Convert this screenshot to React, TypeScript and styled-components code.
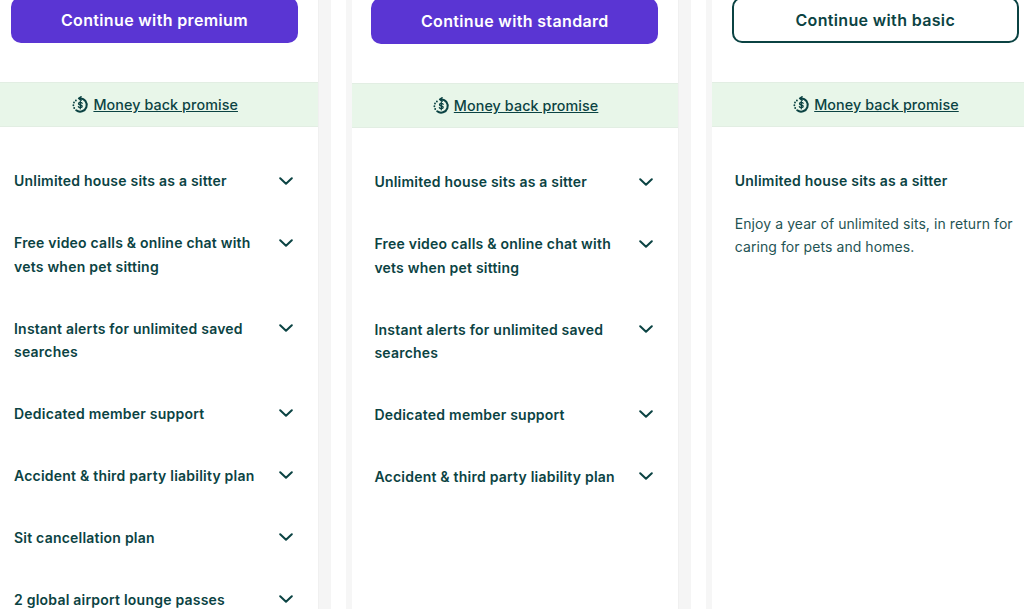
import React from "react";
import styled, { createGlobalStyle } from "styled-components";

const GlobalStyle = createGlobalStyle`
  html, body {
    margin: 0;
    padding: 0;
    background: #fff;
    overflow: hidden;
  }
`;

const plans = [
  {
    name: "premium",
    filled: true,
    drop: 0,
    features: [
      "Unlimited house sits as a sitter",
      "Free video calls & online chat with vets when pet sitting",
      "Instant alerts for unlimited saved searches",
      "Dedicated member support",
      "Accident & third party liability plan",
      "Sit cancellation plan",
      "2 global airport lounge passes",
    ],
  },
  {
    name: "standard",
    filled: true,
    drop: 1,
    features: [
      "Unlimited house sits as a sitter",
      "Free video calls & online chat with vets when pet sitting",
      "Instant alerts for unlimited saved searches",
      "Dedicated member support",
      "Accident & third party liability plan",
    ],
  },
  {
    name: "basic",
    filled: false,
    drop: 0,
    features: [],
  },
];

const MoneyBackIcon = () => (
  <svg width="18" height="18" viewBox="0 0 18 18" fill="none" stroke="#0b4343" strokeLinecap="round" strokeLinejoin="round">
    <path d="M9.2 2.4a6.6 6.6 0 1 1-4 11.9" strokeWidth="2" />
    <path d="M10 .8 7.7 2.4 10 4.2" strokeWidth="1.6" />
    <path d="M2.4 9.2v.1M3 6.5v.1M3.2 12v.1M4.9 4.4v.1" strokeWidth="1.9" />
    <path d="M11.1 7.3c-.3-.6-1-.9-1.8-.9-1 0-1.8.5-1.8 1.3 0 1.8 3.7.8 3.7 2.6 0 .9-.9 1.3-1.9 1.3-.9 0-1.6-.3-1.9-.9M9.3 5.2v7.6" strokeWidth="1.3" />
  </svg>
);

const Chevron = () => (
  <svg width="14" height="8" viewBox="0 0 14 8" fill="none" stroke="#0b4343" strokeWidth="2" strokeLinecap="round" strokeLinejoin="round">
    <path d="M1.2 1.2 7 6.8l5.8-5.6" />
  </svg>
);

export default function App() {
  return (
    <>
      <GlobalStyle />
      <Page>
        {plans.map((plan) => (
          <Card key={plan.name} $drop={plan.drop}>
            <CtaSlot>
              <Cta $filled={plan.filled}>Continue with {plan.name}</Cta>
            </CtaSlot>
            <PromiseBand>
              <MoneyBackIcon />
              <PromiseLink href="#">Money back promise</PromiseLink>
            </PromiseBand>
            {plan.features.length > 0 ? (
              <FeatureList>
                {plan.features.map((feature) => (
                  <FeatureRow key={feature}>
                    <FeatureTitle>{feature}</FeatureTitle>
                    <ChevronSlot>
                      <Chevron />
                    </ChevronSlot>
                  </FeatureRow>
                ))}
              </FeatureList>
            ) : (
              <OpenFeature>
                <FeatureTitle>Unlimited house sits as a sitter</FeatureTitle>
                <FeatureBody>
                  Enjoy a year of unlimited sits, in return for caring for pets
                  and homes.
                </FeatureBody>
              </OpenFeature>
            )}
          </Card>
        ))}
      </Page>
    </>
  );
}

const Page = styled.div`
  display: grid;
  grid-template-columns: repeat(3, 326.4px);
  column-gap: 34px;
  width: 1032.5px;
  height: 612px;
  margin: -3px 0 0 -8.5px;
  overflow: hidden;
  font-family: Inter, "Liberation Sans", sans-serif;
  color: #0b4343;
`;

const Card = styled.section<{ $drop: number }>`
  padding-top: ${(p) => p.$drop}px;
  background: #fff;
  box-sizing: border-box;
  box-shadow: 1px 0 0 #f0f0f0, 13px 0 0 #f5f5f5, -6px 0 0 #f6f6f6;
`;

const CtaSlot = styled.div`
  height: 85px;
  padding: 0 20px 0 19.5px;
  box-sizing: border-box;
`;

const Cta = styled.button<{ $filled: boolean }>`
  display: block;
  width: 100%;
  height: 46px;
  margin: 0;
  padding: 0;
  border: ${(p) => (p.$filled ? "none" : "2px solid #0b4343")};
  border-radius: 10px;
  background: ${(p) => (p.$filled ? "#5a35d3" : "#fff")};
  color: ${(p) => (p.$filled ? "#fff" : "#0b4343")};
  font-family: inherit;
  font-size: 16px;
  font-weight: 600;
  letter-spacing: 0.35px;
`;

const PromiseBand = styled.div`
  display: flex;
  align-items: center;
  justify-content: center;
  gap: 4px;
  height: 45px;
  box-sizing: border-box;
  background: #e8f6e9;
  border-top: 1px solid #e2eee3;
  border-bottom: 1px solid #e2eee3;
`;

const PromiseLink = styled.a`
  color: #0b4343;
  font-size: 14.3px;
  font-weight: 500;
  letter-spacing: 0.1px;
  text-decoration: underline;
`;

const FeatureList = styled.ul`
  list-style: none;
  margin: 0;
  padding: 23px 0 0;
`;

const FeatureRow = styled.li`
  display: flex;
  justify-content: space-between;
  align-items: flex-start;
  padding: 19.4px 25px 19.4px 22.5px;
`;

const FeatureTitle = styled.div`
  max-width: 245px;
  font-size: 14px;
  font-weight: 600;
  letter-spacing: 0.22px;
  line-height: 23.2px;
`;

const ChevronSlot = styled.span`
  display: flex;
  align-items: center;
  height: 23px;
`;

const OpenFeature = styled.div`
  padding: 42.3px 6px 0 22.5px;
`;

const FeatureBody = styled.p`
  margin: 19px 0 0;
  font-size: 14px;
  font-weight: 400;
  letter-spacing: 0.07px;
  line-height: 23px;
  color: #1f5454;
`;
